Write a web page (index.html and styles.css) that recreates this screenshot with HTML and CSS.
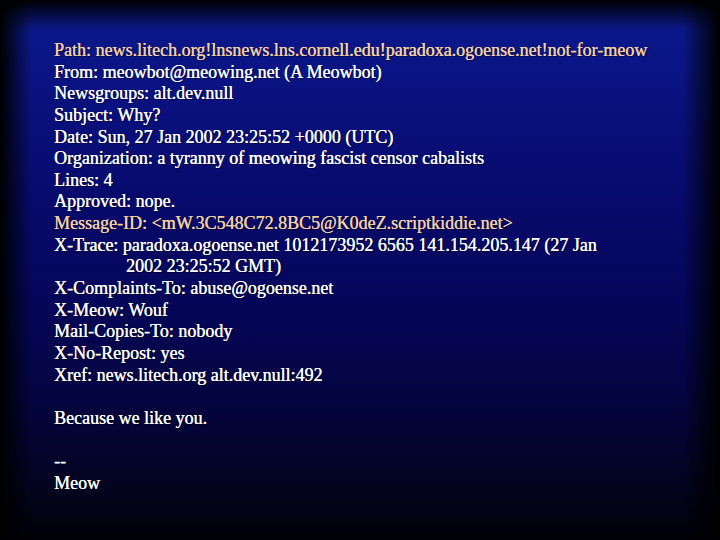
FILE: index.html
```html
<!DOCTYPE html>
<html>
<head>
<meta charset="utf-8">
<link rel="stylesheet" href="styles.css">
</head>
<body>
<div class="slide">
  <div class="message">
    <div class="line hl">Path: news.litech.org!lnsnews.lns.cornell.edu!paradoxa.ogoense.net!not-for-meow</div>
    <div class="line">From: meowbot@meowing.net (A Meowbot)</div>
    <div class="line">Newsgroups: alt.dev.null</div>
    <div class="line">Subject: Why?</div>
    <div class="line">Date: Sun, 27 Jan 2002 23:25:52 +0000 (UTC)</div>
    <div class="line">Organization: a tyranny of meowing fascist censor cabalists</div>
    <div class="line">Lines: 4</div>
    <div class="line">Approved: nope.</div>
    <div class="line hl">Message-ID: &lt;mW.3C548C72.8BC5@K0deZ.scriptkiddie.net&gt;</div>
    <div class="line">X-Trace: paradoxa.ogoense.net 1012173952 6565 141.154.205.147 (27 Jan</div>
    <div class="line cont">2002 23:25:52 GMT)</div>
    <div class="line">X-Complaints-To: abuse@ogoense.net</div>
    <div class="line">X-Meow: Wouf</div>
    <div class="line">Mail-Copies-To: nobody</div>
    <div class="line">X-No-Repost: yes</div>
    <div class="line">Xref: news.litech.org alt.dev.null:492</div>
    <div class="line blank"></div>
    <div class="line">Because we like you.</div>
    <div class="line blank"></div>
    <div class="line">--</div>
    <div class="line">Meow</div>
  </div>
</div>
</body>
</html>
```
FILE: styles.css
```css
html, body {
  margin: 0;
  padding: 0;
  width: 720px;
  height: 540px;
  overflow: hidden;
}
.slide {
  width: 720px;
  height: 540px;
  box-sizing: border-box;
  padding: 40px 0 0 54px;
  background:
    linear-gradient(to right, #000 0px, rgba(0,0,0,0) 32px),
    linear-gradient(to left, #000 0px, rgba(0,0,0,0) 38px),
    linear-gradient(to bottom, #000 0px, rgba(0,0,0,0) 30px),
    linear-gradient(to bottom, #0c1a8e 0px, #0a1382 80px, #070a6c 200px, #05065a 300px, #040440 400px, #030322 480px, #010108 540px);
}
.message {
  font-family: "Liberation Serif", "Times New Roman", serif;
  font-size: 18px;
  line-height: 21.65px;
  color: #ffffff;
  text-shadow: 0.3px 0 0 currentColor, 1px 1px 1px rgba(0,0,20,0.6);
}
.line {
  white-space: nowrap;
  height: 21.65px;
}
.hl {
  color: #f2d0a6;
}
.cont {
  padding-left: 72px;
}
```
